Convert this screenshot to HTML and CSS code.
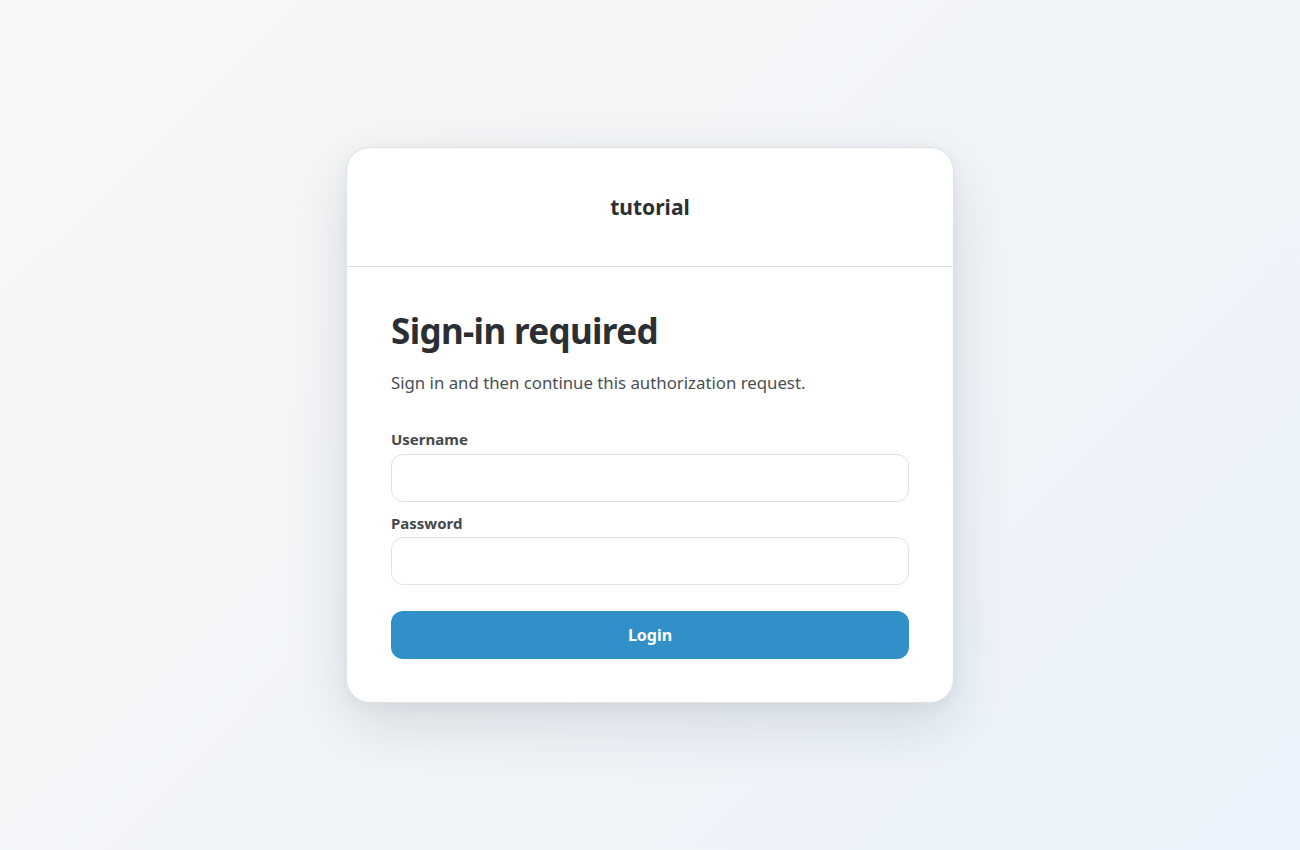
FILE: index.html
```html
<!DOCTYPE html>
<html lang="en">
<head>
<meta charset="utf-8">
<title>Sign-in required</title>
<link rel="stylesheet" href="styles.css">
</head>
<body>
<main class="page">
  <section class="card">
    <header class="card-header">
      <div class="brand">tutorial</div>
    </header>
    <form class="card-body" onsubmit="return false">
      <h1 class="title">Sign-in required</h1>
      <p class="lead">Sign in and then continue this authorization request.</p>
      <div class="fields">
        <label class="field">
          <span class="label">Username</span>
          <input class="input" type="text" name="username">
        </label>
        <label class="field">
          <span class="label">Password</span>
          <input class="input" type="password" name="password">
        </label>
      </div>
      <button class="btn" type="submit">Login</button>
    </form>
  </section>
</main>
</body>
</html>
```

FILE: styles.css
```css
* { box-sizing: border-box; }
html, body { margin: 0; padding: 0; }
body {
  font-family: "Noto Sans", "Open Sans", sans-serif;
  color: #2b2f33;
  background: linear-gradient(135deg, #f7f7f7 0%, #f2f5f8 50%, #eaf2fb 100%);
  min-height: 100vh;
}
.page {
  min-height: 100vh;
  display: flex;
  align-items: center;
  justify-content: center;
}
.card {
  width: 608px;
  background: #ffffff;
  border: 1px solid #dfe1e3;
  border-radius: 24px;
  box-shadow: 0 22px 60px rgba(40, 55, 75, 0.14), 0 4px 14px rgba(40, 55, 75, 0.05);
  overflow: hidden;
}
.card-header {
  padding: 44px 44px;
  border-bottom: 1px solid #dcdee0;
  text-align: center;
}
.brand {
  font-size: 21px;
  line-height: 30px;
  font-weight: 700;
  color: #2b2f33;
}
.card-body {
  padding: 43.4px 44px 43px;
  display: flex;
  flex-direction: column;
  margin: 0;
}
.title {
  margin: 0;
  font-size: 35px;
  line-height: 42px;
  font-weight: 700;
  letter-spacing: -0.65px;
  color: #2b2f33;
}
.lead {
  margin: 18.2px 0 0;
  font-size: 16.8px;
  line-height: 25.2px;
  color: #4a4f55;
}
.fields {
  margin-top: 32.5px;
  display: flex;
  flex-direction: column;
  gap: 10px;
}
.field {
  display: flex;
  flex-direction: column;
  gap: 3px;
}
.label {
  font-size: 15px;
  line-height: 22.5px;
  font-weight: 700;
  color: #45494e;
}
.input {
  height: 48px;
  width: 100%;
  border: 1px solid #e0e1e3;
  border-radius: 12px;
  background: #ffffff;
  font-family: inherit;
  font-size: 16px;
  padding: 0 14px;
  outline: none;
}
.btn {
  margin-top: 26px;
  height: 48px;
  width: 100%;
  border: none;
  border-radius: 12px;
  background: #3090c7;
  color: #ffffff;
  font-family: inherit;
  font-size: 16px;
  font-weight: 700;
  cursor: pointer;
}
```
